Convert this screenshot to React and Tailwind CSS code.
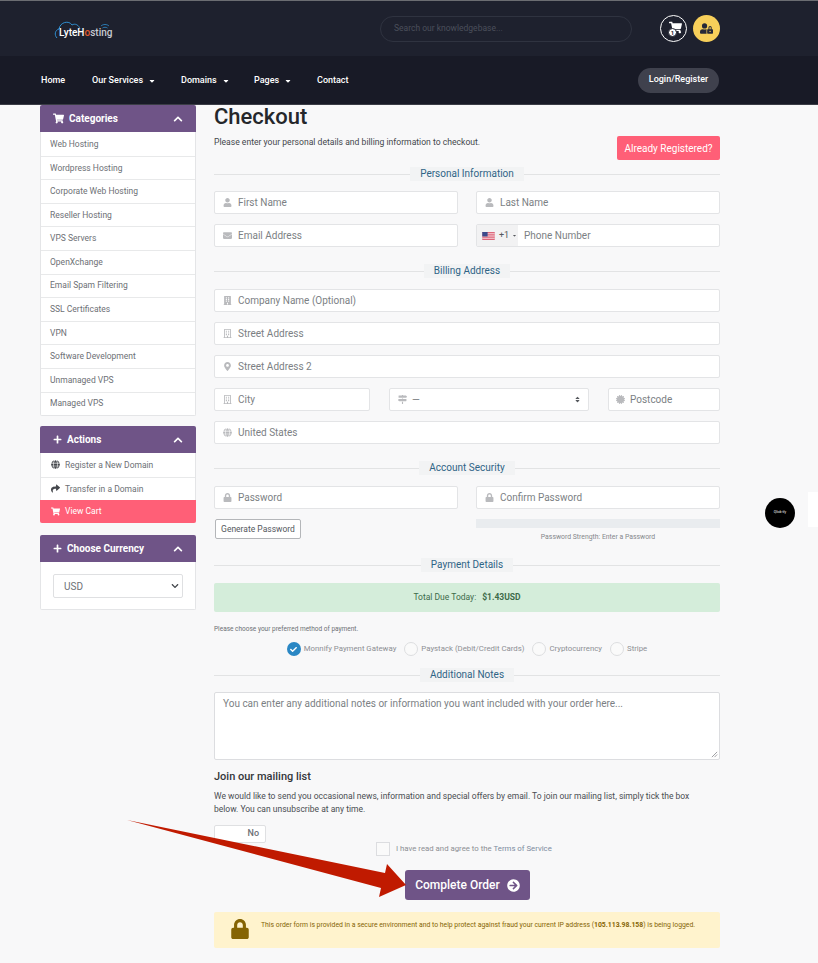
import {
  FaShoppingCart, FaPlus, FaChevronUp, FaGlobe, FaShare, FaUser, FaEnvelope, FaBuilding, FaRegBuilding,
  FaMapMarkerAlt, FaMapSigns, FaCertificate, FaLock, FaCheck, FaArrowCircleRight, FaUserLock, FaCaretDown, FaSort,
} from 'react-icons/fa'

const categories = [
  'Web Hosting', 'Wordpress Hosting', 'Corporate Web Hosting', 'Reseller Hosting', 'VPS Servers', 'OpenXchange',
  'Email Spam Filtering', 'SSL Certificates', 'VPN', 'Software Development', 'Unmanaged VPS', 'Managed VPS',
]

const PanelHead = ({ icon, title }) => (
  <div className="h-[27px] bg-[#6f5487] text-white rounded-t-[2px] flex items-center justify-between pl-[13px] pr-[13px]">
    <div className="flex items-center gap-[5px] text-[10px] font-bold">
      {icon}
      <span>{title}</span>
    </div>
    <FaChevronUp className="w-[10px] h-[10px]" />
  </div>
)

const NavItem = ({ label, caret }) => (
  <div className="flex items-center gap-[5px] text-white text-[9px] font-medium">
    {label}
    {caret && <FaCaretDown className="w-[8px] h-[8px]" />}
  </div>
)

const Field = ({ icon, text, className = 'flex-1', iconBox = 'w-[23px]' }) => (
  <div className={`h-[23px] bg-white border border-[#e3e4e6] rounded-[2px] flex items-center text-[10px] text-[#7c7f84] ${className}`}>
    <div className={`${iconBox} flex justify-center text-[#b9babd] shrink-0 pl-[2px]`}>{icon}</div>
    <span>{text}</span>
  </div>
)

const Heading = ({ title, className }) => (
  <div className={`relative h-[16px] flex items-center justify-center ${className}`}>
    <div className="absolute left-0 right-0 top-[8px] h-px bg-[#e2e3e4]" />
    <span className="relative bg-[#f2f3f4] px-[10px] text-[10px] leading-[14px] text-[#2f6486]">{title}</span>
  </div>
)

const Radio = ({ label, checked }) => (
  <div className="flex items-center gap-[3px] text-[7.8px] text-[#8d8f94]">
    {checked ? (
      <div className="w-[14px] h-[14px] rounded-full bg-[#2a87c4] flex items-center justify-center">
        <FaCheck className="w-[7px] h-[7px] text-white" />
      </div>
    ) : (
      <div className="w-[14px] h-[14px] rounded-full bg-[#fafafa] border border-[#dddee0]" />
    )}
    <span>{label}</span>
  </div>
)

const iconCls = 'w-[9px] h-[9px]'

export default function App() {
  return (
    <div className="relative h-[963px] w-[818px] overflow-hidden bg-[#f8f8f9] font-['Roboto',sans-serif]">
      {/* header */}
      <div className="border-t border-[#6b6d72]">
        <div className="h-[55px] bg-[#1e212e] flex items-center pl-[54px] pr-[98px]">
          <div className="relative w-[62px] h-[26px] shrink-0">
            <svg viewBox="0 0 62 26" className="absolute inset-0 w-[62px] h-[26px]" fill="none">
              <path d="M3 22 C0 19 1 14 5 13 C6 6 15 4 18 9 C21 7 25 9 26 13" stroke="#2f8fd0" strokeWidth="1" />
              <path d="M47 10 C49 8 53 8 55 10 M48.5 12 C50 11 52 11 53.5 12" stroke="#2f8fd0" strokeWidth="0.8" />
            </svg>
            <div className="absolute left-[5px] top-[11px] text-[10px] leading-[12px] font-medium text-white whitespace-nowrap">
              Lyte<span>H</span><span className="text-[#e2592b]">o</span><span className="text-[#c9ccd2]">sting</span>
            </div>
          </div>
          <div className="ml-[264px] w-[252px] h-[26px] rounded-full border border-[#2f3340] flex items-center pl-[13px] text-[8.5px] text-[#4b4f5b]">
            Search our knowledgebase...
          </div>
          <div className="ml-[28px] flex items-center gap-[6px]">
            <div className="relative w-[27px] h-[27px] rounded-full border border-white flex items-center justify-center text-white">
              <FaShoppingCart className="w-[13px] h-[13px] ml-[3px] -mt-[2px]" />
              <div className="absolute left-[7px] top-[12px] w-[9px] h-[9px] rounded-full bg-white border border-[#1e212e] text-[#1e212e] text-[6px] leading-[7px] font-bold text-center">1</div>
            </div>
            <div className="w-[27px] h-[27px] rounded-full bg-[#f7cf5a] flex items-center justify-center text-[#262837]">
              <FaUserLock className="w-[13px] h-[13px]" />
            </div>
          </div>
        </div>
        <div className="h-[49px] bg-[#181a26] border-b border-[#3b3d46] flex items-center pl-[41px] pr-[99px]">
          <div className="flex items-center pt-px">
            <div className="w-[51px]"><NavItem label="Home" /></div>
            <div className="w-[89px]"><NavItem label="Our Services" caret /></div>
            <div className="w-[73px]"><NavItem label="Domains" caret /></div>
            <div className="w-[63px]"><NavItem label="Pages" caret /></div>
            <NavItem label="Contact" />
          </div>
          <div className="ml-auto w-[81px] h-[25px] rounded-full bg-[#3f414d] text-white text-[9px] font-medium flex items-center justify-center">
            Login/Register
          </div>
        </div>
      </div>

      {/* body */}
      <div className="flex pl-[40px] gap-[18px]">
        {/* sidebar */}
        <div className="w-[156px] shrink-0">
          <PanelHead icon={<FaShoppingCart className="w-[11px] h-[11px]" />} title="Categories" />
          <div className="bg-white border border-t-0 border-[#e4e5e7] rounded-b-[2px] mb-[10px]">
            {categories.map((c, i) => (
              <div key={c} className={`h-[23.6px] flex items-center pl-[9px] text-[8.5px] text-[#6d7075] border-t ${i ? 'border-[#e8e9ea]' : 'border-transparent'}`}>
                {c}
              </div>
            ))}
          </div>

          <PanelHead icon={<FaPlus className="w-[9px] h-[9px]" />} title="Actions" />
          <div className="bg-white border-x border-[#e4e5e7] rounded-b-[2px] mb-[12px]">
            <div className="h-[23.5px] flex items-center gap-[5px] pl-[10px] text-[8.5px] text-[#6d7075]">
              <FaGlobe className="w-[9px] h-[9px] text-[#44474c]" /> Register a New Domain
            </div>
            <div className="h-[23.5px] flex items-center gap-[5px] pl-[10px] text-[8.5px] text-[#6d7075] border-t border-[#e8e9ea]">
              <FaShare className="w-[9px] h-[9px] text-[#44474c]" /> Transfer in a Domain
            </div>
            <div className="h-[23px] -mx-px flex items-center gap-[5px] pl-[11px] text-[8.5px] text-white bg-[#ff5f77] rounded-b-[2px]">
              <FaShoppingCart className="w-[9px] h-[9px]" /> View Cart
            </div>
          </div>

          <PanelHead icon={<FaPlus className="w-[9px] h-[9px]" />} title="Choose Currency" />
          <div className="bg-white border border-t-0 border-[#e4e5e7] rounded-b-[2px] h-[48px] px-[12px] pt-[12px]">
            <div className="h-[24px] border border-[#dfe0e2] rounded-[2px] flex items-center justify-between pl-[10px] pr-[3px] text-[10px] text-[#6d7075]">
              USD
              <FaChevronUp className="w-[8px] h-[8px] rotate-180 text-[#44474c]" />
            </div>
          </div>
        </div>

        {/* main */}
        <div className="w-[506px] shrink-0">
          <h1 className="text-[22px] leading-[24px] font-medium text-[#25272b]">Checkout</h1>
          <div className="flex justify-between items-start mt-[7px]">
            <p className="text-[8.6px] leading-[12px] text-[#44474c]">Please enter your personal details and billing information to checkout.</p>
            <div className="w-[103px] h-[24px] bg-[#ff5f77] rounded-[2px] text-white text-[10px] flex items-center justify-center">Already Registered?</div>
          </div>

          <Heading title="Personal Information" className="mt-[6px]" />
          <div className="mt-[9px] flex flex-col gap-[10px]">
            <div className="flex gap-[18px]">
              <Field icon={<FaUser className={iconCls} />} text="First Name" />
              <Field icon={<FaUser className={iconCls} />} text="Last Name" />
            </div>
            <div className="flex gap-[18px]">
              <Field icon={<FaEnvelope className={iconCls} />} text="Email Address" />
              <div className="flex-1 h-[23px] bg-white border border-[#e3e4e6] rounded-[2px] flex items-center text-[10px] text-[#7c7f84]">
                <div className="w-[41px] h-full bg-[#f2f2f3] flex items-center pl-[5px] gap-[4px] shrink-0 text-[9px] text-[#55585d]">
                  <svg viewBox="0 0 14 9" className="w-[13px] h-[8px] shrink-0">
                    <rect width="14" height="9" fill="#d9546a" />
                    <path d="M0 1.5h14M0 3.5h14M0 5.5h14M0 7.5h14" stroke="#fff" strokeWidth="0.8" />
                    <rect width="6" height="5" fill="#3c4b8c" />
                  </svg>
                  <span>+1</span>
                  <FaCaretDown className="w-[5px] h-[5px] -ml-[1px]" />
                </div>
                <span className="pl-[6px]">Phone Number</span>
              </div>
            </div>
          </div>

          <Heading title="Billing Address" className="mt-[16px]" />
          <div className="mt-[10px] flex flex-col gap-[10px]">
            <Field icon={<FaBuilding className={iconCls} />} text="Company Name (Optional)" className="w-full" />
            <Field icon={<FaRegBuilding className={iconCls} />} text="Street Address" className="w-full" />
            <Field icon={<FaMapMarkerAlt className={iconCls} />} text="Street Address 2" className="w-full" />
            <div className="flex gap-[19px]">
              <Field icon={<FaRegBuilding className={iconCls} />} text="City" className="w-[156px] shrink-0" />
              <div className="relative flex-1">
                <Field icon={<FaMapSigns className={iconCls} />} text="—" className="w-full" iconBox="w-[22px]" />
                <FaSort className="absolute right-[8px] top-[8px] w-[7px] h-[7px] text-[#55585d]" />
              </div>
              <Field icon={<FaCertificate className={iconCls} />} text="Postcode" className="w-[112px] shrink-0" iconBox="w-[21px]" />
            </div>
            <Field icon={<FaGlobe className={iconCls} />} text="United States" className="w-full" />
          </div>

          <Heading title="Account Security" className="mt-[16px]" />
          <div className="mt-[10px] flex gap-[18px]">
            <Field icon={<FaLock className={iconCls} />} text="Password" />
            <Field icon={<FaLock className={iconCls} />} text="Confirm Password" />
          </div>
          <div className="mt-[10px] flex gap-[18px]">
            <div className="flex-1">
              <div className="ml-px w-[86px] h-[20px] bg-white border border-[#b4b6b9] rounded-[2px] text-[8.5px] text-[#55585d] flex items-center justify-center whitespace-nowrap">
                Generate Password
              </div>
            </div>
            <div className="flex-1">
              <div className="h-[9px] bg-[#e9ecef]" />
              <div className="mt-[4px] text-center text-[6.85px] leading-[10px] text-[#85878c]">Password Strength: Enter a Password</div>
            </div>
          </div>

          <Heading title="Payment Details" className="mt-[15px]" />
          <div className="mt-[10px] h-[29px] bg-[#d4edda] rounded-[2px] flex items-center justify-center gap-[6px] text-[8.5px] text-[#3d6b4a]">
            <span>Total Due Today:</span>
            <span className="font-bold">$1.43USD</span>
          </div>
          <div className="mt-[12px] text-[6.5px] leading-[10px] text-[#6d7075]">Please choose your preferred method of payment.</div>
          <div className="mt-[6px] h-[18px] flex items-center justify-center gap-[8px]">
            <Radio label="Monnify Payment Gateway" checked />
            <Radio label="Paystack (Debit/Credit Cards)" />
            <Radio label="Cryptocurrency" />
            <Radio label="Stripe" />
          </div>

          <Heading title="Additional Notes" className="mt-[9px]" />
          <div className="relative mt-[9px] h-[68px] bg-white border border-[#dcdde0] rounded-[2px] px-[8px] py-[4px] text-[10px] leading-[14px] text-[#7c7f84]">
            You can enter any additional notes or information you want included with your order here...
            <svg viewBox="0 0 8 8" className="absolute right-[1px] bottom-[1px] w-[7px] h-[7px]">
              <path d="M1 7 7 1M4 7 7 4" stroke="#77797d" strokeWidth="0.8" />
            </svg>
          </div>

          <div className="mt-[10px] text-[11px] leading-[14px] font-medium text-[#34363a]">Join our mailing list</div>
          <p className="mt-[6px] pr-[20px] text-[8.5px] leading-[13px] text-[#4a4d52]">
            We would like to send you occasional news, information and special offers by email. To join our mailing list, simply tick the box below. You can unsubscribe at any time.
          </p>
          <div className="mt-[9px] w-[52px] h-[18px] bg-white border border-[#dfe0e2] rounded-[2px] flex items-center justify-end pr-[6px] text-[9px] font-medium text-[#6d7075]">
            No
          </div>
          <div className="-mt-px h-[14px] flex items-center pl-[162px] gap-[6px] text-[7.8px] text-[#8d8f94]">
            <div className="w-[14px] h-[14px] border border-[#dcdde0] bg-[#fafafa]" />
            <span>I have read and agree to the <span className="text-[#7c8ba0]">Terms of Service</span></span>
          </div>
          <div className="mt-[14px] flex justify-center pl-px">
            <div className="w-[125px] h-[30px] bg-[#6f5487] rounded-[3px] text-white text-[12px] font-medium flex items-center justify-center gap-[7px]">
              Complete Order
              <FaArrowCircleRight className="w-[13px] h-[13px]" />
            </div>
          </div>
          <div className="mt-[12px] h-[36px] bg-[#fff3cd] rounded-[2px] flex items-start">
            <FaLock className="w-[18px] h-[20px] ml-[17px] mt-[7px] text-[#856404] shrink-0" />
            <div className="ml-[12px] mt-[8px] text-[6.85px] leading-[10px] text-[#856404] whitespace-nowrap">
              This order form is provided in a secure environment and to help protect against fraud your current IP address (<b>105.113.98.158</b>) is being logged.
            </div>
          </div>
        </div>
      </div>

      {/* floating chat badge */}
      <div className="absolute left-[765px] top-[498px] w-[30px] h-[30px] rounded-full bg-black text-white text-[3.5px] flex items-center justify-center">Qlick-ify</div>
      <div className="absolute left-[808px] top-[492px] w-[10px] h-[35px] bg-white" />

      {/* red annotation arrow */}
      <svg viewBox="0 0 818 963" className="absolute inset-0 w-[818px] h-[963px] pointer-events-none">
        <polygon points="127,820 385,873 387,864 406,885 379,897 381,888" fill="#c01a00" />
      </svg>
    </div>
  )
}
